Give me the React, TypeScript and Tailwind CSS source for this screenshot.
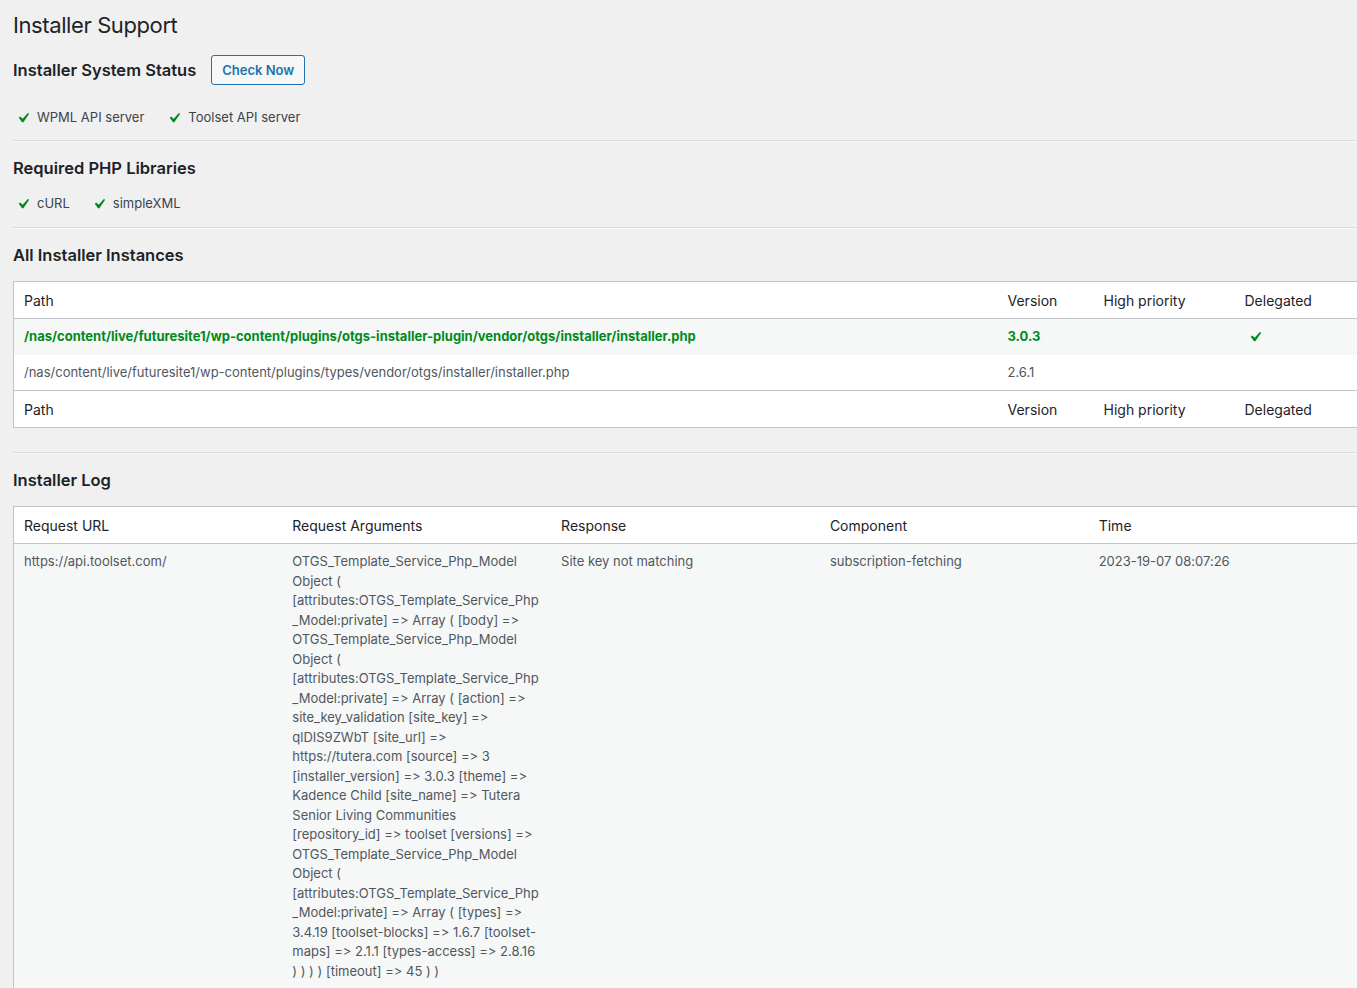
import React from "react";

const Check = ({ className = "" }: { className?: string }) => (
  <svg viewBox="0 0 20 20" className={"w-5 h-5 shrink-0 " + className} aria-hidden="true">
    <path d="M14.83 4.89l1.34.94-5.81 8.38H9.02L5.78 9.67l1.34-1.25 2.57 2.4z" fill="#008a20" />
  </svg>
);

const StatusItem = ({ label }: { label: string }) => (
  <div className="flex items-center">
    <Check />
    <span className="ml-1">{label}</span>
  </div>
);

const Hr = ({ className = "" }: { className?: string }) => (
  <div className={"h-px bg-[#dcdcde] border-b border-[#f6f7f7] box-content " + className} />
);

const argLines = [
  "OTGS_Template_Service_Php_Model",
  "Object (",
  "[attributes:OTGS_Template_Service_Php",
  "_Model:private] => Array ( [body] =>",
  "OTGS_Template_Service_Php_Model",
  "Object (",
  "[attributes:OTGS_Template_Service_Php",
  "_Model:private] => Array ( [action] =>",
  "site_key_validation [site_key] =>",
  "qlDIS9ZWbT [site_url] =>",
  "https://tutera.com [source] => 3",
  "[installer_version] => 3.0.3 [theme] =>",
  "Kadence Child [site_name] => Tutera",
  "Senior Living Communities",
  "[repository_id] => toolset [versions] =>",
  "OTGS_Template_Service_Php_Model",
  "Object (",
  "[attributes:OTGS_Template_Service_Php",
  "_Model:private] => Array ( [types] =>",
  "3.4.19 [toolset-blocks] => 1.6.7 [toolset-",
  "maps] => 2.1.1 [types-access] => 2.8.16",
  ") ) ) ) [timeout] => 45 ) )",
];

const H2 = ({ children, className = "" }: { children: React.ReactNode; className?: string }) => (
  <h2 className={"text-[16.5px] leading-[24px] font-semibold text-[#1d2327] " + className}>{children}</h2>
);

export default function App() {
  return (
    <div className="min-h-[988px] w-full overflow-hidden bg-[#f0f0f1] font-['Inter','Liberation_Sans',sans-serif] text-[13px] text-[#3c434a] antialiased [font-feature-settings:'calt'_0,'liga'_0]">
      <div className="pl-[13px]">
        <h1 className="pt-[10px] text-[22px] tracking-[-0.4px] leading-[30px] font-normal text-[#1d2327]">Installer Support</h1>

        <div className="mt-[15px] flex items-center h-[30px]">
          <H2>Installer System Status</H2>
          <button className="ml-[15px] h-[30px] px-[10px] rounded-[3px] border border-[#2271b1] bg-[#f6f7f7] text-[#2271b1] text-[13px] font-semibold leading-[28px]">
            Check Now
          </button>
        </div>

        <div className="mt-[23px] flex items-center gap-[20px] h-[20px]">
          <StatusItem label="WPML API server" />
          <StatusItem label="Toolset API server" />
        </div>

        <Hr className="mt-[12px]" />

        <H2 className="mt-[14px]">Required PHP Libraries</H2>
        <div className="mt-[14px] flex items-center gap-[19px] h-[20px]">
          <StatusItem label="cURL" />
          <StatusItem label="simpleXML" />
        </div>

        <Hr className="mt-[13px]" />

        <H2 className="mt-[14px]">All Installer Instances</H2>

        <table className="mt-[14px] w-[1345px] table-fixed border-collapse border border-[#c3c4c7] bg-white">
          <colgroup>
            <col className="w-[984px]" />
            <col className="w-[96px]" />
            <col className="w-[141px]" />
            <col />
          </colgroup>
          <thead>
            <tr className="h-[37px] border-b border-[#c3c4c7] text-left text-[14px] text-[#1d2327]">
              <th className="px-[10px] font-normal">Path</th>
              <th className="px-[10px] font-normal">Version</th>
              <th className="px-[10px] font-normal">High priority</th>
              <th className="px-[10px] font-normal">Delegated</th>
            </tr>
          </thead>
          <tbody>
            <tr className="h-[36px] bg-[#f6f7f7] text-[#008a20] font-bold">
              <td className="px-[10px] whitespace-nowrap">/nas/content/live/futuresite1/wp-content/plugins/otgs-installer-plugin/vendor/otgs/installer/installer.php</td>
              <td className="px-[10px]">3.0.3</td>
              <td className="px-[10px]"></td>
              <td className="px-[10px]">
                <Check />
              </td>
            </tr>
            <tr className="h-[36px] bg-white text-[#50575e]">
              <td className="px-[10px] whitespace-nowrap">/nas/content/live/futuresite1/wp-content/plugins/types/vendor/otgs/installer/installer.php</td>
              <td className="px-[10px]">2.6.1</td>
              <td className="px-[10px]"></td>
              <td className="px-[10px]"></td>
            </tr>
          </tbody>
          <tfoot>
            <tr className="h-[37px] border-t border-[#c3c4c7] text-left text-[14px] text-[#1d2327]">
              <th className="px-[10px] font-normal">Path</th>
              <th className="px-[10px] font-normal">Version</th>
              <th className="px-[10px] font-normal">High priority</th>
              <th className="px-[10px] font-normal">Delegated</th>
            </tr>
          </tfoot>
        </table>

        <Hr className="mt-[24px]" />

        <H2 className="mt-[14px]">Installer Log</H2>

        <table className="mt-[14px] w-[1345px] table-fixed border-collapse border border-[#c3c4c7] bg-white">
          <thead>
            <tr className="h-[37px] border-b border-[#c3c4c7] text-left text-[14px] text-[#1d2327]">
              <th className="px-[10px] font-normal">Request URL</th>
              <th className="px-[10px] font-normal">Request Arguments</th>
              <th className="px-[10px] font-normal">Response</th>
              <th className="px-[10px] font-normal">Component</th>
              <th className="px-[10px] font-normal">Time</th>
            </tr>
          </thead>
          <tbody>
            <tr className="bg-[#f6f7f7] text-[#50575e] align-top leading-[19.5px]">
              <td className="px-[10px] pt-[8px] pb-[20px]">https://api.toolset.com/</td>
              <td className="px-[10px] pt-[8px] pb-[20px]">
                {argLines.map((l, i) => (
                  <div key={i} className="whitespace-nowrap">{l}</div>
                ))}
              </td>
              <td className="px-[10px] pt-[8px] pb-[20px]">Site key not matching</td>
              <td className="px-[10px] pt-[8px] pb-[20px]">subscription-fetching</td>
              <td className="px-[10px] pt-[8px] pb-[20px]">2023-19-07 08:07:26</td>
            </tr>
          </tbody>
        </table>
      </div>
    </div>
  );
}
